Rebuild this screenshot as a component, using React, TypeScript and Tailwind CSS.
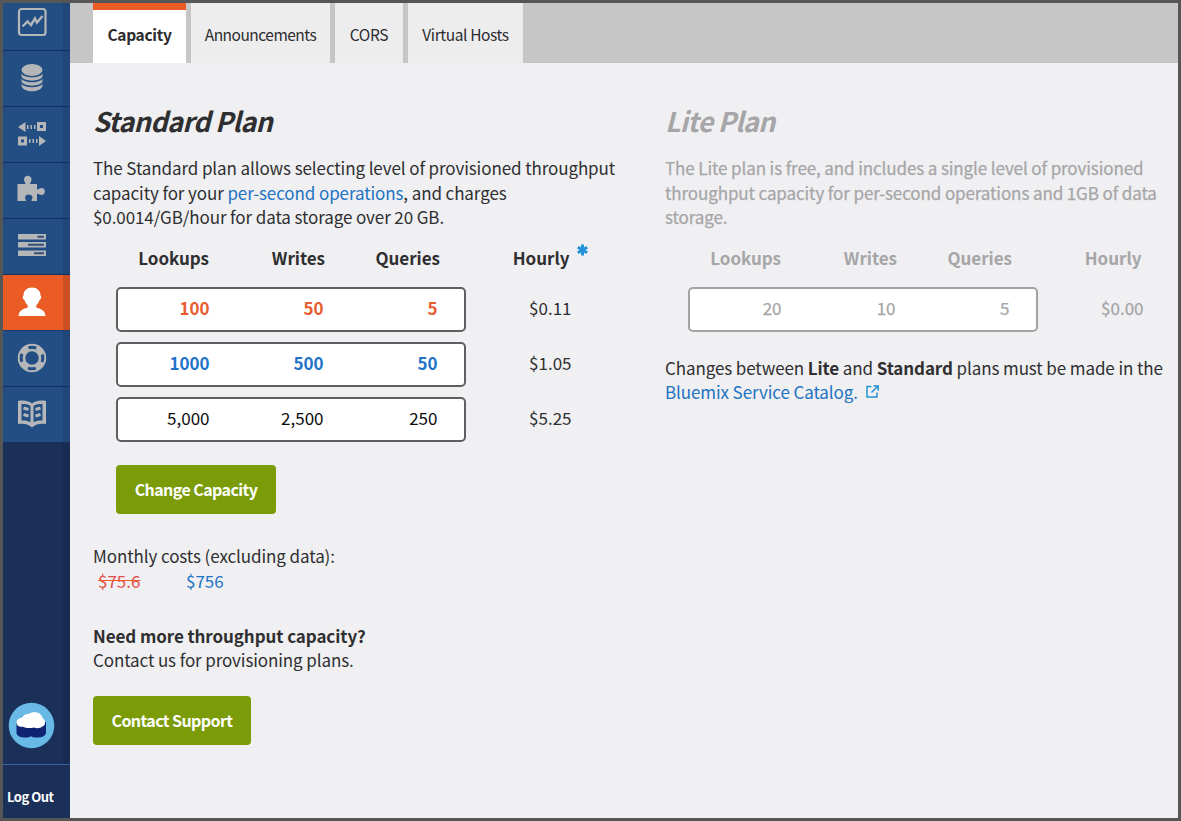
import type { ReactNode } from "react";

const ICON = "#b4b6b8";

function NavItem({ children, active = false }: { children: ReactNode; active?: boolean }) {
  return (
    <a
      className={
        active
          ? "flex h-14 shrink-0 justify-between border-b border-[#1b3a70] bg-[#ea5b25]"
          : "flex h-14 shrink-0 justify-between border-b border-[#15305f] bg-[#234e84]"
      }
    >
      <svg className="mt-[12px] ml-[14px]" width="30" height="30" viewBox="0 0 30 30" fill={active ? "#fff" : ICON}>
        {children}
      </svg>
      <span className={active ? "w-[7px] bg-[#cb4f22]" : "w-[7px] bg-[#214679]"} />
    </a>
  );
}

function Sidebar() {
  return (
    <nav className="flex w-[67px] shrink-0 flex-col overflow-hidden bg-[#1a3059]">
      <div className="-mt-2 flex flex-col">
        <NavItem>
          <rect x="2" y="2" width="26.500" height="26" rx="2.500" fill="none" stroke={ICON} strokeWidth="2.200" />
          <path d="M5.500 19.500l5-5 3.500 3.500 4-6.500 2 4 5.500-6.500" fill="none" stroke={ICON} strokeWidth="2.400" />
        </NavItem>
        <NavItem>
          <ellipse cx="15" cy="7" rx="10.500" ry="6" />
          <path d="M4.500 10.500c2 5 19 5 21 0v3c-2 5.500-19 5.500-21 0zM4.500 15.500c2 5 19 5 21 0v3c-2 5.500-19 5.500-21 0zM4.500 20.500c2 5 19 5 21 0v2.500c-2 7-19 7-21 0z" />
        </NavItem>
        <NavItem>
          <path d="M1 8l7.500-5v10zM29 22l-7-5v10z" />
          <path d="M10 6h1.500v4H10zM13.500 6H15v4h-1.500zM17 6h1.500v4H17zM12 20h1.500v4H12zM15.500 20H17v4h-1.500zM19 20h1.500v4H19z" />
          <path d="M21.500 4.500h6v6h-6zM2.500 19h6v6h-6z" fill="none" stroke={ICON} strokeWidth="3" />
        </NavItem>
        <NavItem>
          <path d="M.5 9H8.500c0-1.500-1.500-2-1.500-4.500 0-5 7.500-5 7.500 0 0 2.500-1.500 3-1.500 4.500h7v5.500c1.500 0 2.500-1.500 4.500-1.500 4.500 0 4.500 7 0 7-2 0-3-1.500-4.500-1.500V26h-5.500c0-1.500 1-2 1-3.500 0-4-7.500-4-7.500 0 0 1.500 1 2 1 3.500h-8.500z" />
        </NavItem>
        <NavItem>
          <path d="M1 3h28v5.500H1zM1 11h28v5.500H1zM1 19.500h28V25H1z" />
          <path d="M20.500 4.800h6.500v2h-6.500zM11 12.800h16v2H11zM17 21.300h10v2H17z" fill="#365073" />
        </NavItem>
        <NavItem active>
          <path d="M15 .5c5 0 8.500 3 8.500 8 1.500 1 .5 4-1 4.500-.7 2.700-2 4-3.200 5.200v2.300c4 1.200 8.700 2.500 9.200 8.500h-27c.5-6 5.200-7.300 9.200-8.500v-2.300C9.500 17 8.200 15.700 7.500 13 6 12.500 5 9.500 6.500 8.500c0-5 3.500-8 8.500-8z" />
        </NavItem>
        <NavItem>
          <circle cx="15" cy="15" r="10.500" fill="none" stroke={ICON} strokeWidth="7.500" />
          <circle cx="15" cy="15" r="10.800" fill="none" stroke="#234e84" strokeWidth="3" strokeDasharray="8 8.965" strokeDashoffset="4" />
        </NavItem>
        <NavItem>
          <path d="M1 2c5-1 10-.5 14 2.500 4-3 9-3.500 14-2.500v23c-5-.5-10-.5-14 3.500-4-4-9-4-14-3.500zM4.500 5v16.500c3-.3 6.500 0 9 1.800V7c-2.500-2-6-2.300-9-2zM25.500 5c-3-.3-6.500 0-9 2v16.300c2.500-1.800 6-2.100 9-1.800z" fillRule="evenodd" />
          <path d="M6.500 9l5 1.500M6.500 15.500l5 1.500M23.500 9l-5 1.500M23.500 15.500l-5 1.500" stroke={ICON} strokeWidth="3" />
        </NavItem>
      </div>
      <div className="flex flex-1 flex-col border-r-[7px] border-[#182c53]">
        <svg className="mt-auto mb-[15px] ml-[5px]" width="47" height="47" viewBox="0 0 47 47">
          <circle cx="23.500" cy="23.500" r="22.800" fill="#68b9e5" />
          <path d="M8.500 20h29.500v10.500c0 6-13 6-15 3.500-2 2.500-14.500 2.500-14.500-3.500z" fill="#0e2372" />
          <path d="M8.500 20.500c0-3 3-4.500 6-5 1.500-3.500 5-3.500 6-3.500 4-3 13-2.500 14 4 3.500 2 3.500 7.500 0 8.500-2.500 2-6 2-8.500 1-3 1-9 .8-11-.8-3.500.5-6.500-1-6.500-4.200z" fill="#fff" />
        </svg>
      </div>
      <div className="flex h-[54px] shrink-0 items-center border-t border-t-[#35649d] pt-[11px] pl-[4px] text-[13px] font-bold whitespace-nowrap text-white">
        <span className="tracking-[-0.5px]">Log Out</span>
      </div>
    </nav>
  );
}

function Tabs() {
  return (
    <div className="flex h-[60px] shrink-0 gap-[5px] bg-[#c6c6c7] pl-[23px] text-[15.500px] leading-[24px] text-[#2c2c2e]">
      <div className="flex w-[93px] justify-center border-t-[7px] border-[#ea5b25] bg-white pt-[12px] font-bold tracking-[-0.3px]">Capacity</div>
      <div className="flex w-[139px] justify-center bg-[#ededee] pt-[19px] tracking-[-0.5px]">Announcements</div>
      <div className="flex w-[68px] justify-center bg-[#ededee] pt-[19px] tracking-[-0.35px]">CORS</div>
      <div className="flex w-[115px] justify-center bg-[#ededee] pt-[19px] tracking-[-0.4px]">Virtual Hosts</div>
    </div>
  );
}

function Headings() {
  return (
    <div className="flex h-[30px] items-center font-bold tracking-[-0.02px]">
      <span className="w-[116px] text-right">Lookups</span>
      <span className="w-[116px] text-right">Writes</span>
      <span className="w-[115px] text-right">Queries</span>
      <span className="w-[129.5px] text-right">Hourly</span>
    </div>
  );
}

function PlanRow({ values, price, box }: { values: string[]; price: string; box: string }) {
  return (
    <div className="flex h-[45px] items-center pl-[23px]">
      <div className={`flex h-[45px] w-[350px] items-center rounded-[5px] border-2 bg-white pr-[26px] pb-[2px] ${box}`}>
        <span className="w-[91.5px] text-right">{values[0]}</span>
        <span className="w-[114px] text-right">{values[1]}</span>
        <span className="w-[114px] text-right">{values[2]}</span>
      </div>
      <span className="w-[105.5px] pb-[2px] text-right">{price}</span>
    </div>
  );
}

export default function App() {
  return (
    <div
      className="flex h-[821px] w-[1181px] overflow-hidden border-[3px] border-[#555655] bg-[#f0eff1] text-[17px] leading-[24.5px] text-[#2f2f31]"
      style={{ fontFamily: '"Noto Sans CJK SC", "Noto Sans", sans-serif' }}
    >
      <Sidebar />
      <div className="flex flex-1 flex-col">
        <Tabs />
        <main className="flex flex-1 whitespace-nowrap">
          <section className="flex w-[572px] shrink-0 flex-col items-start pl-[23px]">
            <h1 className="mt-[38px] text-[27px] leading-[40px] font-bold italic tracking-[-0.7px]">Standard Plan</h1>
            <p className="mt-[15px] tracking-[-0.1px]">
              The Standard plan allows selecting level of provisioned throughput
              <br />
              capacity for your <a className="text-[#2273c3]">per-second operations</a>, and charges
              <br />
              $0.0014/GB/hour for data storage over 20 GB.
            </p>
            <div className="mt-[14px] flex">
              <Headings />
              <span className="-mt-[4px] ml-[7px] flex h-5 items-center">
                <svg width="11" height="12" viewBox="0 0 11 12" stroke="#2492da" strokeWidth="3">
                  <path d="M5.500 .5v11M.8 3.200l9.400 5.600M10.200 3.200L.8 8.800" />
                </svg>
              </span>
            </div>
            <div className="mt-[13px] flex flex-col gap-[10px]">
              <PlanRow values={["100", "50", "5"]} price="$0.11" box="border-[#5e5f61] font-bold text-[#e95c30]" />
              <PlanRow values={["1000", "500", "50"]} price="$1.05" box="border-[#5e5f61] font-bold text-[#2273c8]" />
              <PlanRow values={["5,000", "2,500", "250"]} price="$5.25" box="border-[#5e5f61] text-[#0c0c0c]" />
            </div>
            <button className="mt-[23px] ml-[23px] h-[49px] w-[160px] rounded-[4px] bg-[#7b9c08] text-[16px] font-bold tracking-[-0.58px] text-white">Change Capacity</button>
            <p className="mt-[30px] tracking-[-0.09px]">Monthly costs (excluding data):</p>
            <div className="mt-[1px] flex pl-[5px]">
              <span className="w-[88px] text-[#e2504b] line-through decoration-[#ea5b25]">$75.6</span>
              <span className="text-[#2273c3]">$756</span>
            </div>
            <p className="mt-[30px] font-bold tracking-[-0.08px]">Need more throughput capacity?</p>
            <p className="tracking-[-0.11px]">Contact us for provisioning plans.</p>
            <button className="mt-[23px] h-[49px] w-[158px] rounded-[4px] bg-[#7b9c08] text-[16px] font-bold tracking-[-0.58px] text-white">Contact Support</button>
          </section>
          <section className="flex flex-col items-start pl-[23px]">
            <div className="text-[#a6a6a8]">
              <h1 className="mt-[38px] text-[27px] leading-[40px] font-bold italic tracking-[-0.75px]">Lite Plan</h1>
              <p className="mt-[15px] tracking-[-0.11px] [-webkit-text-stroke:0.25px_#a6a6a8]">
                The Lite plan is free, and includes a single level of provisioned
                <br />
                throughput capacity for per-second operations and 1GB of data
                <br />
                storage.
              </p>
              <div className="mt-[14px] flex">
                <Headings />
              </div>
              <div className="mt-[13px] [-webkit-text-stroke:0.25px_#a6a6a8]">
                <PlanRow values={["20", "10", "5"]} price="$0.00" box="border-[#a3a3a5]" />
              </div>
            </div>
            <p className="mt-[24px] tracking-[-0.1px]">
              Changes between <b>Lite</b> and <b>Standard</b> plans must be made in the
              <br />
              <a className="inline-flex items-center gap-[8px] text-[#2273c3]">
                Bluemix Service Catalog.
                <svg className="-mt-[2px]" width="13" height="13" viewBox="0 0 13 13" fill="none" stroke="#2492da" strokeWidth="1.500">
                  <path d="M5.500 1.500H1v10.500h10V7.500M5.500 7.500l6-6M7.500 1h4.700v4.700" />
                </svg>
              </a>
            </p>
          </section>
        </main>
      </div>
    </div>
  );
}
